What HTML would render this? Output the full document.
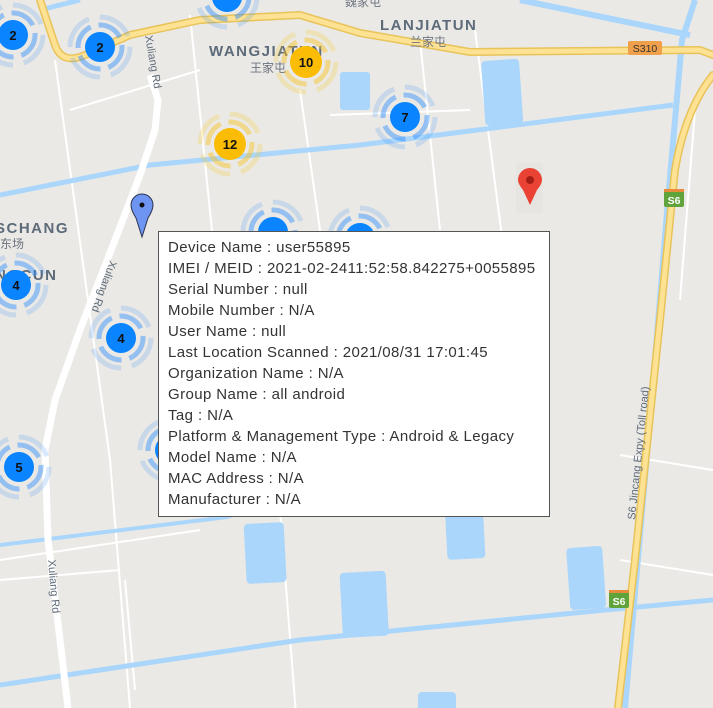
<!DOCTYPE html>
<html><head><meta charset="utf-8"><style>
html,body{margin:0;padding:0;width:713px;height:708px;overflow:hidden;background:#ebe9e5;}
svg{position:absolute;left:0;top:0}
.tip{position:absolute;left:158px;top:231px;width:390px;height:284px;background:#fff;border:1.5px solid #555;box-sizing:content-box;font-family:"Liberation Sans",sans-serif;font-size:15px;letter-spacing:0.4px;color:#333;}
.tip div{position:absolute;left:9px;white-space:nowrap;}
</style></head><body>
<svg width="713" height="708" viewBox="0 0 713 708" font-family="Liberation Sans, sans-serif">
<rect width="713" height="708" fill="#ebe9e5"/>
<g stroke="#fff" stroke-width="2" fill="none">
<path d="M55 60 L110 460 L130 708"/>
<path d="M190 15 L215 260"/>
<path d="M70 110 L200 70"/>
<path d="M300 90 L330 300"/>
<path d="M420 40 L440 230"/>
<path d="M475 30 L505 260"/>
<path d="M330 115 L470 110"/>
<path d="M0 580 L120 570"/>
<path d="M125 580 L135 690"/>
<path d="M280 510 L298 740"/>
<path d="M620 455 L713 470"/>
<path d="M620 560 L713 575"/>
<path d="M695 110 L680 300"/>
<path d="M0 560 L200 530"/>
</g>
<g fill="#aad6fb">
<rect x="340" y="72" width="30" height="38" rx="3"/>
<rect x="483" y="60" width="38" height="65" rx="4" transform="rotate(-4 500 90)"/>
<rect x="245" y="523" width="40" height="60" rx="4" transform="rotate(-3 265 550)"/>
<rect x="341" y="572" width="46" height="65" rx="4" transform="rotate(-3 360 600)"/>
<rect x="446" y="505" width="38" height="54" rx="4" transform="rotate(-3 465 530)"/>
<rect x="568" y="547" width="36" height="62" rx="4" transform="rotate(-4 585 575)"/>
<rect x="418" y="692" width="38" height="30" rx="4"/>
</g>
<g stroke="#aad6fb" fill="none">
<path d="M0 195 L150 165 L360 145 L673 105" stroke-width="5"/>
<path d="M0 545 L227 517 L440 447" stroke-width="4"/>
<path d="M0 685 L300 640 L605 610 L713 600" stroke-width="5"/>
<path d="M520 0 L690 35" stroke-width="6"/>
<path d="M695 0 L682 40 L668 200 L650 420 L625 708" stroke-width="6"/>
<path d="M40 10 L80 0" stroke-width="5"/>
</g>
<path d="M150 75 L158 100 L155 130 L140 175 L115 240 L80 330 L55 400 L45 450 L48 540 L60 640 L68 708" stroke="#fff" stroke-width="7" fill="none"/>
<g fill="none" stroke-linecap="round">
<path d="M40 0 L55 45 Q62 65 85 55 L130 35 L200 20 L300 15 L360 33 L470 52 L700 50 L713 55" stroke="#e8c35a" stroke-width="8"/>
<path d="M40 0 L55 45 Q62 65 85 55 L130 35 L200 20 L300 15 L360 33 L470 52 L700 50 L713 55" stroke="#fde293" stroke-width="5"/>
<path d="M713 75 Q685 110 675 170 L660 320 L635 560 L618 708" stroke="#e8c35a" stroke-width="8"/>
<path d="M713 75 Q685 110 675 170 L660 320 L635 560 L618 708" stroke="#fde293" stroke-width="5"/>
</g>
<rect x="628" y="41" width="34" height="14" rx="2" fill="#f0a04b"/>
<text x="645" y="52" font-size="10.5" text-anchor="middle" fill="#333">S310</text>
<g><rect x="664" y="189" width="20" height="18" rx="2" fill="#5fa33a"/><rect x="664" y="189" width="20" height="3" fill="#e88b3a"/><text x="674" y="204" font-size="10.5" font-weight="bold" text-anchor="middle" fill="#fff">S6</text></g>
<g><rect x="609" y="590" width="20" height="18" rx="2" fill="#5fa33a"/><rect x="609" y="590" width="20" height="3" fill="#e88b3a"/><text x="619" y="605" font-size="10.5" font-weight="bold" text-anchor="middle" fill="#fff">S6</text></g>
<g fill="#5d6a7a" font-weight="bold" font-size="15" letter-spacing="1.5">
<text x="209" y="56">WANGJIATUN</text>
<text x="380" y="30">LANJIATUN</text>
<text x="-5" y="233">SCHANG</text>
<text x="-5" y="280">NGCUN</text>
</g>
<g fill="#6b7280" font-size="12" font-family="Noto Sans CJK SC, sans-serif">
<text x="250" y="72">王家屯</text>
<text x="410" y="46">兰家屯</text>
<text x="0" y="248">东场</text>
<text x="345" y="6">魏家屯</text>
</g>
<g fill="#5d6a7a" font-size="11">
<text transform="translate(145,36) rotate(80)">Xuliang Rd</text>
<text transform="translate(110,260) rotate(110)">Xuliang Rd</text>
<text transform="translate(48,560) rotate(85)">Xuliang Rd</text>
<text transform="translate(635,520) rotate(-84)">S6 Jincang Expy (Toll road)</text>
</g>
<defs>
<g id="cb">
<circle r="30" fill="none" stroke="#2a8cff" stroke-opacity=".18" stroke-width="5" stroke-dasharray="36 11"/>
<circle r="22" fill="none" stroke="#2a8cff" stroke-opacity=".45" stroke-width="5" stroke-dasharray="26 8"/>
<circle r="15" fill="#0a84ff"/>
</g>
<g id="cy">
<circle r="30" fill="none" stroke="#f8c21a" stroke-opacity=".22" stroke-width="5" stroke-dasharray="36 11"/>
<circle r="22" fill="none" stroke="#f8c21a" stroke-opacity=".45" stroke-width="5" stroke-dasharray="26 8"/>
<circle r="16" fill="#fbbc05"/>
</g>
</defs>
<g font-size="13" font-weight="bold" text-anchor="middle" fill="#111">
<use href="#cb" x="13" y="35"/><text x="13" y="40">2</text>
<use href="#cb" x="100" y="47"/><text x="100" y="52">2</text>
<use href="#cb" x="227" y="-3"/>
<use href="#cy" x="306" y="62"/><text x="306" y="67">10</text>
<use href="#cy" x="230" y="144"/><text x="230" y="149">12</text>
<use href="#cb" x="405" y="117"/><text x="405" y="122">7</text>
<use href="#cb" x="16" y="285"/><text x="16" y="290">4</text>
<use href="#cb" x="121" y="338"/><text x="121" y="343">4</text>
<use href="#cb" x="19" y="467"/><text x="19" y="472">5</text>
<use href="#cb" x="273" y="232"/>
<use href="#cb" x="360" y="238"/>
<use href="#cb" x="170" y="450"/>
</g>
<path d="M142 237 L136 218 Q131 210 131 205 A11 11 0 1 1 153 205 Q153 210 148 218 Z" fill="#6f95f2" stroke="#2a3550" stroke-width="1"/>
<circle cx="142" cy="205" r="2.5" fill="#111"/>
<rect x="516" y="163" width="27" height="50" fill="#e4e2de" opacity=".6"/>
<path d="M530 205 L523 190 Q518 184 518 180 A12 12 0 1 1 542 180 Q542 184 537 190 Z" fill="#ea4335"/>
<circle cx="530" cy="180" r="4" fill="#a51e16"/>
</svg>
<div class="tip">
<div style="top:7px">Device Name : user55895</div>
<div style="top:28px">IMEI / MEID : 2021-02-2411:52:58.842275+0055895</div>
<div style="top:49px">Serial Number : null</div>
<div style="top:70px">Mobile Number : N/A</div>
<div style="top:91px">User Name : null</div>
<div style="top:112px">Last Location Scanned : 2021/08/31 17:01:45</div>
<div style="top:133px">Organization Name : N/A</div>
<div style="top:154px">Group Name : all android</div>
<div style="top:175px">Tag : N/A</div>
<div style="top:196px">Platform &amp; Management Type : Android &amp; Legacy</div>
<div style="top:217px">Model Name : N/A</div>
<div style="top:238px">MAC Address : N/A</div>
<div style="top:259px">Manufacturer : N/A</div>
</div>
</body></html>
